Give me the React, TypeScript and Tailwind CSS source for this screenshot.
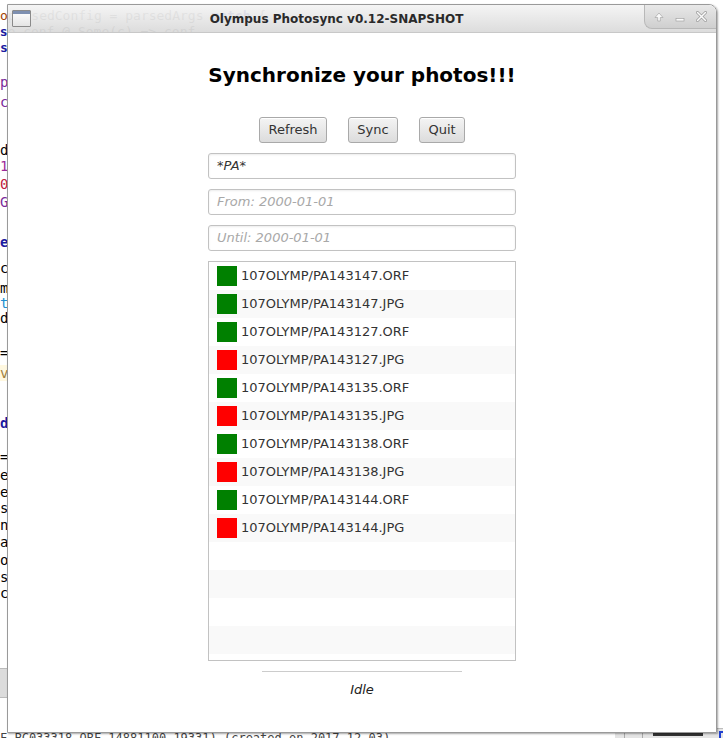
import React from "react";

const files: { name: string; ok: boolean }[] = [
  { name: "107OLYMP/PA143147.ORF", ok: true },
  { name: "107OLYMP/PA143147.JPG", ok: true },
  { name: "107OLYMP/PA143127.ORF", ok: true },
  { name: "107OLYMP/PA143127.JPG", ok: false },
  { name: "107OLYMP/PA143135.ORF", ok: true },
  { name: "107OLYMP/PA143135.JPG", ok: false },
  { name: "107OLYMP/PA143138.ORF", ok: true },
  { name: "107OLYMP/PA143138.JPG", ok: false },
  { name: "107OLYMP/PA143144.ORF", ok: true },
  { name: "107OLYMP/PA143144.JPG", ok: false },
];

const leftChars: { y: number; c: string; cls: string }[] = [
  { y: 74, c: "p", cls: "text-[#7a2a9a]" },
  { y: 94, c: "c", cls: "text-[#7a2a9a]" },
  { y: 142, c: "d", cls: "text-black" },
  { y: 158, c: "1", cls: "text-[#9a2a9a]" },
  { y: 176, c: "0", cls: "text-[#c02040]" },
  { y: 194, c: "G", cls: "text-[#7a2a9a]" },
  { y: 234, c: "e", cls: "text-[#1a1aa0] font-bold" },
  { y: 260, c: "c", cls: "text-black" },
  { y: 280, c: "m", cls: "text-black" },
  { y: 295, c: "t", cls: "text-[#2090d0]" },
  { y: 310, c: "d", cls: "text-black" },
  { y: 345, c: "=", cls: "text-black" },
  { y: 365, c: "v", cls: "text-[#a08040] bg-[#fff8e0]" },
  { y: 415, c: "d", cls: "text-[#1a1aa0] font-bold" },
  { y: 449, c: "=", cls: "text-black" },
  { y: 467, c: "e", cls: "text-black" },
  { y: 484, c: "e", cls: "text-black" },
  { y: 500, c: "s", cls: "text-black" },
  { y: 517, c: "n", cls: "text-black" },
  { y: 534, c: "a", cls: "text-black" },
  { y: 552, c: "o", cls: "text-black" },
  { y: 569, c: "s", cls: "text-black" },
  { y: 585, c: "c", cls: "text-black" },
];

function Row({ name, ok, alt }: { name?: string; ok?: boolean; alt: boolean }) {
  return (
    <div className={`h-[28px] flex items-center pl-[8px] ${alt ? "bg-[#f9f9f9]" : "bg-white"}`}>
      {name !== undefined && (
        <>
          <div className={`w-[20px] h-[20px] ${ok ? "bg-[#008000]" : "bg-[#ff0000]"}`} />
          <span className="ml-[4px] text-[13px] text-[#333333]">{name}</span>
        </>
      )}
    </div>
  );
}

export default function App() {
  const rows = Array.from({ length: 15 }, (_, i) => i);
  const fieldCls =
    "h-[26px] border border-[#c2c2c2] rounded-[3px] bg-white shadow-[inset_0_1px_2px_rgba(0,0,0,0.08)] flex items-center pl-[8px] text-[13px] italic";
  return (
    <div
      className="relative w-[723px] h-[738px] bg-white overflow-hidden"
      style={{ fontFamily: '"DejaVu Sans", sans-serif' }}
    >
      {/* desktop behind: code editor fragments */}
      <div
        className="absolute left-0 top-[8px] text-[13px] leading-[16px] whitespace-pre text-[#555]"
        style={{ fontFamily: '"DejaVu Sans Mono", monospace' }}
      >
        <div>
          <span className="text-[#a04000]">o</span>
          <span>parsedConfig = parsedArgs </span>
          <span className="font-bold text-[#1a1aa0]">match</span>
          <span> {"{"}</span>
        </div>
        <div className="-ml-[16px]">
          <span className="font-bold text-[#1a1aa0]">cas</span>
          <span>e conf @ Some(c) =&gt; conf</span>
        </div>
        <div className="font-bold text-[#1a1aa0]">s</div>
      </div>
      {leftChars.map((l, i) => (
        <div
          key={i}
          className={`absolute left-0 text-[14px] leading-[16px] ${l.cls}`}
          style={{ top: l.y, fontFamily: '"DejaVu Sans Mono", monospace' }}
        >
          {l.c}
        </div>
      ))}
      <div className="absolute left-0 top-[668px] w-[7px] h-[30px] bg-[#dcdcdc] border-y border-[#bbb]" />
      <div
        className="absolute left-0 top-[731px] text-[12px] leading-[14px] whitespace-pre text-[#444]"
        style={{ fontFamily: '"DejaVu Sans Mono", monospace' }}
      >
        F,PC033318.ORF,14881100,19331) (created on 2017-12-03)
      </div>
      <div className="absolute left-[615px] top-[728px] w-[108px] h-[10px] bg-[#e4e4e4] border-t border-[#bdbdbd] flex">
        <div className="w-[10px] border-r border-[#aaa]" />
        <div className="w-[18px] border-r border-[#aaa]" />
        <div className="ml-[10px] mt-[4px] w-[50px] h-[3px] bg-[#333]" />
        <div className="ml-auto w-[4px] h-[8px] border-l-2 border-t-2 border-[#2040d0] mt-[2px]" />
      </div>

      {/* the window */}
      <div className="absolute left-[7px] top-[4px] w-[710px] h-[729px] flex flex-col border border-[#9a9a9a] rounded-tr-[8px] shadow-[1px_1px_2px_rgba(0,0,0,0.35)]">
        {/* title bar */}
        <div className="relative h-[28px] flex items-center rounded-tr-[8px] bg-gradient-to-b from-[#f4f4f4]/[0.93] to-[#dadada]/[0.93] border-b border-[#c8c8c8]">
          <div className="ml-[4px] w-[19px] h-[17px] border border-[#8a8a8a] bg-gradient-to-b from-[#ffffff] to-[#e4e4e4] rounded-[1px]">
            <div className="h-[3px] bg-[#7d8fb0]" />
          </div>
          <div className="flex-1 text-center text-[12px] font-bold text-[#2a2a2a] -ml-[2px]">
            Olympus Photosync v0.12-SNAPSHOT
          </div>
          <div className="w-[72px] h-[24px] self-start rounded-bl-[8px] rounded-tr-[8px] border-l border-b border-[#b8b8b8] bg-gradient-to-b from-[#e8e8e8] to-[#cfcfcf] flex items-center justify-around px-[4px]">
            <svg width="10" height="10" viewBox="0 0 10 10">
              <path d="M5 1 L9 5.5 H6.3 V9 H3.7 V5.5 H1 Z" fill="#fafafa" stroke="#9a9a9a" strokeWidth="0.6" />
            </svg>
            <svg width="10" height="10" viewBox="0 0 10 10">
              <rect x="1" y="6.5" width="8" height="2.5" fill="#fafafa" stroke="#9a9a9a" strokeWidth="0.6" />
            </svg>
            <svg width="11" height="11" viewBox="0 0 11 11">
              <path d="M1.5 1.5 L9.5 9.5 M9.5 1.5 L1.5 9.5" stroke="#9a9a9a" strokeWidth="3" strokeLinecap="round" />
              <path d="M1.5 1.5 L9.5 9.5 M9.5 1.5 L1.5 9.5" stroke="#fafafa" strokeWidth="1.6" strokeLinecap="round" />
            </svg>
          </div>
        </div>

        {/* content */}
        <div className="flex-1 bg-white flex flex-col items-center">
          <h1 className="mt-[30px] text-[20px] leading-[24px] font-bold text-black">
            Synchronize your photos!!!
          </h1>
          <div className="mt-[30px] flex gap-[21px]">
            {["Refresh", "Sync", "Quit"].map((b, i) => (
              <button
                key={b}
                className={`h-[26px] ${i === 0 ? "w-[68px]" : i === 1 ? "w-[50px]" : "w-[46px]"} rounded-[3px] border border-[#a9a9a9] bg-gradient-to-b from-[#f4f4f4] to-[#dcdcdc] text-[13px] text-[#333] shadow-[inset_0_1px_0_#ffffff]`}
              >
                {b}
              </button>
            ))}
          </div>
          <div className="mt-[10px] w-[308px] flex flex-col gap-[10px]">
            <div className={`${fieldCls} text-[#333]`}>*PA*</div>
            <div className={`${fieldCls} text-[#a8a8a8]`}>From: 2000-01-01</div>
            <div className={`${fieldCls} text-[#a8a8a8]`}>Until: 2000-01-01</div>
          </div>
          <div className="mt-[10px] w-[308px] h-[400px] border border-[#c2c2c2] overflow-hidden">
            {rows.map((i) => (
              <Row key={i} alt={i % 2 === 1} name={files[i]?.name} ok={files[i]?.ok} />
            ))}
          </div>
          <div className="mt-[10px] w-[200px] h-px bg-[#cccccc]" />
          <div className="mt-[10px] text-[13px] leading-[16px] italic text-[#222]">Idle</div>
        </div>
      </div>
    </div>
  );
}
